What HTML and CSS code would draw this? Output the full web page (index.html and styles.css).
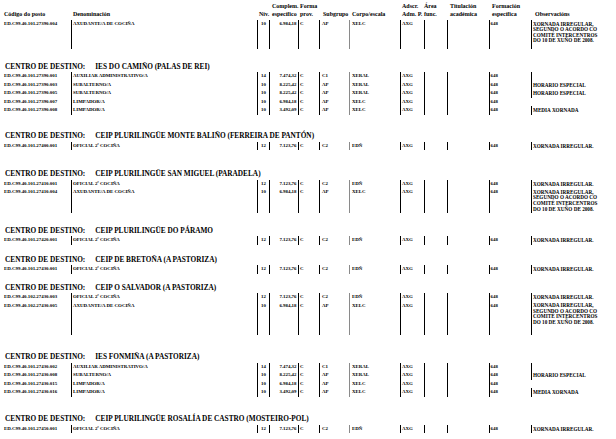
FILE: index.html
```html
<!DOCTYPE html>
<html lang="gl">
<head>
<meta charset="utf-8">
<title>Relación de postos</title>
<link rel="stylesheet" href="styles.css">
</head>
<body>
<div class="page">
  <div class="grid head">
    <div class="h c-code">Código do posto</div>
    <div class="h c-den">Denominación</div>
    <div class="h c-niv">Nív.</div>
    <div class="h c-comp">Complem.<br>específico</div>
    <div class="h c-forma">Forma<br>prov.</div>
    <div class="h c-sub">Subgrupo</div>
    <div class="h c-corpo">Corpo/escala</div>
    <div class="h c-ads">Adscr.<br>Adm. P.</div>
    <div class="h c-area">Área<br>func.</div>
    <div class="h c-tit">Titulación<br>académica</div>
    <div class="h c-form">Formación<br>específica</div>
    <div class="h c-obs">Observacións</div>
  </div>

  <section class="sec s0">
    <div class="grid row multi tall">
      <div class="code">ED.C99.40.101.27390.004</div><div class="den">AXUDANTE/A DE COCIÑA</div><div class="niv">10</div><div class="comp">6.984,18</div><div class="forma">C</div><div class="sub">AP</div><div class="corpo">XELC</div><div class="ads">AXG</div><div class="area"></div><div class="tit"></div><div class="form">648</div><div class="obs">XORNADA IRREGULAR,<br>SEGUNDO O ACORDO CO<br>COMITÉ INTERCENTROS<br>DO 10 DE XUÑO DE 2008.</div>
    </div>
  </section>

  <section class="sec s1">
    <h2 class="title"><span>CENTRO DE DESTINO:</span><span class="name">IES DO CAMIÑO (PALAS DE REI)</span></h2>
    <div class="grid row"><div class="code">ED.C99.40.101.27390.001</div><div class="den">AUXILIAR ADMINISTRATIVO/A</div><div class="niv">14</div><div class="comp">7.474,32</div><div class="forma">C</div><div class="sub">C1</div><div class="corpo">XERAL</div><div class="ads">AXG</div><div class="area"></div><div class="tit"></div><div class="form">648</div><div class="obs"></div></div>
    <div class="grid row"><div class="code">ED.C99.40.101.27390.003</div><div class="den">SUBALTERNO/A</div><div class="niv">10</div><div class="comp">8.225,42</div><div class="forma">C</div><div class="sub">AP</div><div class="corpo">XERAL</div><div class="ads">AXG</div><div class="area"></div><div class="tit"></div><div class="form">648</div><div class="obs">HORARIO ESPECIAL</div></div>
    <div class="grid row"><div class="code">ED.C99.40.101.27390.005</div><div class="den">SUBALTERNO/A</div><div class="niv">10</div><div class="comp">8.225,42</div><div class="forma">C</div><div class="sub">AP</div><div class="corpo">XERAL</div><div class="ads">AXG</div><div class="area"></div><div class="tit"></div><div class="form">648</div><div class="obs">HORARIO ESPECIAL</div></div>
    <div class="grid row"><div class="code">ED.C99.40.101.27390.007</div><div class="den">LIMPADOR/A</div><div class="niv">10</div><div class="comp">6.984,18</div><div class="forma">C</div><div class="sub">AP</div><div class="corpo">XELC</div><div class="ads">AXG</div><div class="area"></div><div class="tit"></div><div class="form">648</div><div class="obs noline"></div></div>
    <div class="grid row"><div class="code">ED.C99.40.101.27390.008</div><div class="den">LIMPADOR/A</div><div class="niv">10</div><div class="comp">3.492,09</div><div class="forma">C</div><div class="sub">AP</div><div class="corpo">XELC</div><div class="ads">AXG</div><div class="area"></div><div class="tit"></div><div class="form">648</div><div class="obs">MEDIA XORNADA</div></div>
  </section>

  <section class="sec s2">
    <h2 class="title"><span>CENTRO DE DESTINO:</span><span class="name">CEIP PLURILINGÜE MONTE BALIÑO (FERREIRA DE PANTÓN)</span></h2>
    <div class="grid row"><div class="code">ED.C99.40.101.27400.001</div><div class="den">OFICIAL 2ª COCIÑA</div><div class="niv">12</div><div class="comp">7.123,76</div><div class="forma">C</div><div class="sub">C2</div><div class="corpo">EDÑ</div><div class="ads">AXG</div><div class="area"></div><div class="tit"></div><div class="form">648</div><div class="obs">XORNADA IRREGULAR.</div></div>
  </section>

  <section class="sec s3">
    <h2 class="title"><span>CENTRO DE DESTINO:</span><span class="name">CEIP PLURILINGÜE SAN MIGUEL (PARADELA)</span></h2>
    <div class="grid row"><div class="code">ED.C99.40.101.27410.001</div><div class="den">OFICIAL 2ª COCIÑA</div><div class="niv">12</div><div class="comp">7.123,76</div><div class="forma">C</div><div class="sub">C2</div><div class="corpo">EDÑ</div><div class="ads">AXG</div><div class="area"></div><div class="tit"></div><div class="form">648</div><div class="obs">XORNADA IRREGULAR.</div></div>
    <div class="grid row multi"><div class="code">ED.C99.40.101.27410.004</div><div class="den">AXUDANTE/A DE COCIÑA</div><div class="niv">10</div><div class="comp">6.984,18</div><div class="forma">C</div><div class="sub">AP</div><div class="corpo">XELC</div><div class="ads">AXG</div><div class="area"></div><div class="tit"></div><div class="form">648</div><div class="obs">XORNADA IRREGULAR,<br>SEGUNDO O ACORDO CO<br>COMITÉ INTERCENTROS<br>DO 10 DE XUÑO DE 2008.</div></div>
  </section>

  <section class="sec s4">
    <h2 class="title"><span>CENTRO DE DESTINO:</span><span class="name">CEIP PLURILINGÜE DO PÁRAMO</span></h2>
    <div class="grid row"><div class="code">ED.C99.40.101.27420.001</div><div class="den">OFICIAL 2ª COCIÑA</div><div class="niv">12</div><div class="comp">7.123,76</div><div class="forma">C</div><div class="sub">C2</div><div class="corpo">EDÑ</div><div class="ads">AXG</div><div class="area"></div><div class="tit"></div><div class="form">648</div><div class="obs">XORNADA IRREGULAR.</div></div>
  </section>

  <section class="sec s5">
    <h2 class="title"><span>CENTRO DE DESTINO:</span><span class="name">CEIP DE BRETOÑA (A PASTORIZA)</span></h2>
    <div class="grid row"><div class="code">ED.C99.40.101.27430.001</div><div class="den">OFICIAL 2ª COCIÑA</div><div class="niv">12</div><div class="comp">7.123,76</div><div class="forma">C</div><div class="sub">C2</div><div class="corpo">EDÑ</div><div class="ads">AXG</div><div class="area"></div><div class="tit"></div><div class="form">648</div><div class="obs">XORNADA IRREGULAR.</div></div>
  </section>

  <section class="sec s6">
    <h2 class="title"><span>CENTRO DE DESTINO:</span><span class="name">CEIP O SALVADOR (A PASTORIZA)</span></h2>
    <div class="grid row"><div class="code">ED.C99.40.102.27430.003</div><div class="den">OFICIAL 2ª COCIÑA</div><div class="niv">12</div><div class="comp">7.123,76</div><div class="forma">C</div><div class="sub">C2</div><div class="corpo">EDÑ</div><div class="ads">AXG</div><div class="area"></div><div class="tit"></div><div class="form">648</div><div class="obs">XORNADA IRREGULAR.</div></div>
    <div class="grid row multi taller"><div class="code">ED.C99.40.102.27430.005</div><div class="den">AXUDANTE/A DE COCIÑA</div><div class="niv">10</div><div class="comp">6.984,18</div><div class="forma">C</div><div class="sub">AP</div><div class="corpo">XELC</div><div class="ads">AXG</div><div class="area"></div><div class="tit"></div><div class="form">648</div><div class="obs">XORNADA IRREGULAR,<br>SEGUNDO O ACORDO CO<br>COMITÉ INTERCENTROS<br>DO 10 DE XUÑO DE 2008.</div></div>
  </section>

  <section class="sec s7">
    <h2 class="title"><span>CENTRO DE DESTINO:</span><span class="name">IES FONMIÑA (A PASTORIZA)</span></h2>
    <div class="grid row"><div class="code">ED.C99.40.101.27430.002</div><div class="den">AUXILIAR ADMINISTRATIVO/A</div><div class="niv">14</div><div class="comp">7.474,32</div><div class="forma">C</div><div class="sub">C1</div><div class="corpo">XERAL</div><div class="ads">AXG</div><div class="area"></div><div class="tit"></div><div class="form">648</div><div class="obs"></div></div>
    <div class="grid row"><div class="code">ED.C99.40.101.27430.008</div><div class="den">SUBALTERNO/A</div><div class="niv">10</div><div class="comp">8.225,42</div><div class="forma">C</div><div class="sub">AP</div><div class="corpo">XERAL</div><div class="ads">AXG</div><div class="area"></div><div class="tit"></div><div class="form">648</div><div class="obs">HORARIO ESPECIAL</div></div>
    <div class="grid row"><div class="code">ED.C99.40.101.27430.015</div><div class="den">LIMPADOR/A</div><div class="niv">10</div><div class="comp">6.984,18</div><div class="forma">C</div><div class="sub">AP</div><div class="corpo">XELC</div><div class="ads">AXG</div><div class="area"></div><div class="tit"></div><div class="form">648</div><div class="obs noline"></div></div>
    <div class="grid row"><div class="code">ED.C99.40.101.27430.016</div><div class="den">LIMPADOR/A</div><div class="niv">10</div><div class="comp">3.492,09</div><div class="forma">C</div><div class="sub">AP</div><div class="corpo">XELC</div><div class="ads">AXG</div><div class="area"></div><div class="tit"></div><div class="form">648</div><div class="obs">MEDIA XORNADA</div></div>
  </section>

  <section class="sec s8">
    <h2 class="title"><span>CENTRO DE DESTINO:</span><span class="name">CEIP PLURILINGÜE ROSALÍA DE CASTRO (MOSTEIRO-POL)</span></h2>
    <div class="grid row"><div class="code">ED.C99.40.101.27450.001</div><div class="den">OFICIAL 2ª COCIÑA</div><div class="niv">12</div><div class="comp">7.123,76</div><div class="forma">C</div><div class="sub">C2</div><div class="corpo">EDÑ</div><div class="ads">AXG</div><div class="area"></div><div class="tit"></div><div class="form">648</div><div class="obs">XORNADA IRREGULAR.</div></div>
  </section>
</div>
</body>
</html>
```
FILE: styles.css
```css
* { box-sizing: border-box; }
html, body { margin: 0; padding: 0; background: #fff; }
body {
  font-family: "Liberation Serif", "Times New Roman", serif;
  font-weight: bold;
  color: #000;
}
.page {
  padding: 2px 0 0 4px;
  width: 616px;
  transform: translateZ(0);
  background: #fff;
}
.grid {
  display: grid;
  grid-template-columns: 67px 186px 12px 29px 21px 30px 51px 24px 23px 42px 42px 81px;
}

/* header */
.head {
  height: 16px;
  align-items: end;
}
.h {
  font-size: 6px;
  line-height: 8px;
  white-space: nowrap;
}
.c-den { padding-left: 2px; }
.c-niv { padding-left: 2px; }
.c-comp { padding-left: 3px; }
.c-forma { padding-left: 2px; }
.c-sub { padding-left: 4px; }
.c-corpo { padding-left: 3px; }
.c-ads { padding-left: 2px; }
.c-area { padding-left: 0; }
.c-tit { padding-left: 3px; }
.c-form { padding-left: 3px; }
.c-obs { padding-left: 4px; }

/* sections */
.sec { display: flex; flex-direction: column; }
.s0 { margin-top: 2px; }
.s1 { margin-top: 13px; }
.s2 { margin-top: 16.5px; }
.s3 { margin-top: 19px; }
.s4 { margin-top: 13px; }
.s5 { margin-top: 10px; }
.s6 { margin-top: 9px; }
.s7 { margin-top: 17.5px; }
.s8 { margin-top: 17.5px; }

.title {
  margin: 0 0 1.5px 0;
  padding-left: 1px;
  font-size: 7.3px;
  line-height: 9px;
  font-weight: bold;
  white-space: nowrap;
}
.title .name { margin-left: 10px; }

/* data rows */
.row > div {
  font-size: 4.9px;
  line-height: 8.5px;
  white-space: nowrap;
  min-height: 8.5px;
}
.row .den,
.row .niv,
.row .comp,
.row .forma,
.row .sub,
.row .ads,
.row .area,
.row .tit,
.row .form,
.row .obs { border-left: 1px solid #000; }
.row .corpo { border-left: 1px solid #8a8a8a; }
.row .obs.noline { border-left-color: transparent; }

.row .den { padding-left: 1px; }
.row .niv { text-align: center; }
.row .comp { text-align: right; padding-right: 1.5px; }
.row .forma { padding-left: 1px; }
.row .sub { padding-left: 2px; }
.row .corpo { padding-left: 2px; }
.row .ads { padding-left: 1px; }
.row .form { padding-left: 0.5px; }
.row .obs { padding-left: 1px; font-size: 5.2px; }

.multi .obs {
  line-height: 5.6px;
  padding-top: 1.5px;
  padding-bottom: 0.5px;
}
.multi.tall .obs { padding-bottom: 5px; }
.multi.taller .obs { padding-bottom: 9px; }
```
